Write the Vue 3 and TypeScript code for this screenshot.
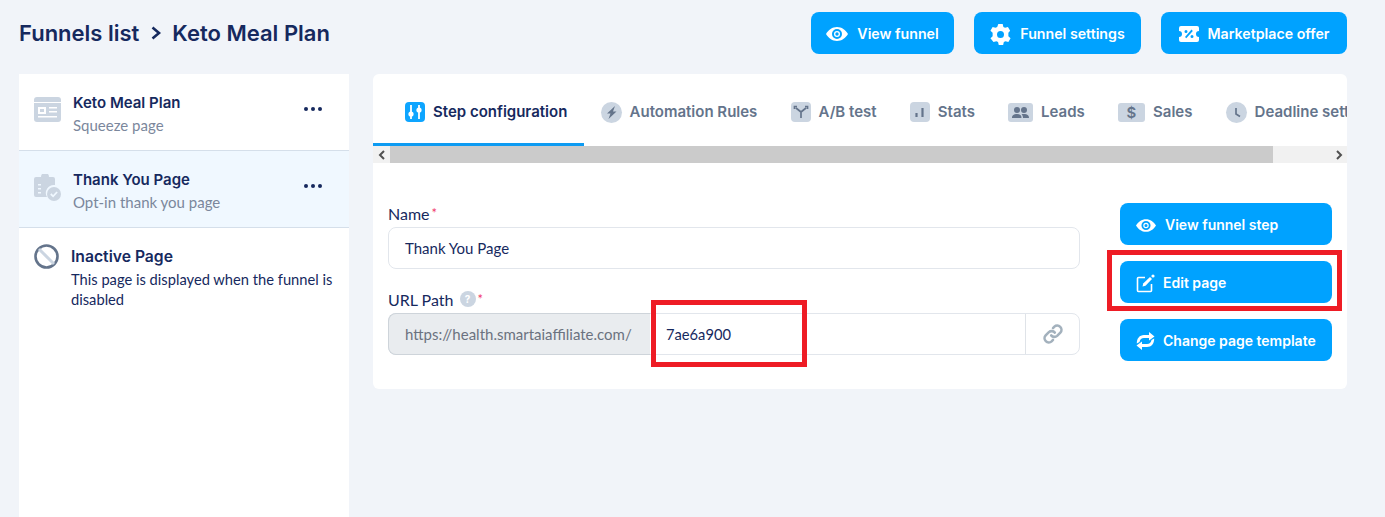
<script setup lang="ts">
const tabs: { label: string; w: number; h: number; r: string; kind: string }[] = [
  { label: 'Automation Rules', w: 21, h: 21, r: '50%', kind: 'bolt' },
  { label: 'A/B test', w: 20, h: 20, r: '4px', kind: 'split' },
  { label: 'Stats', w: 20, h: 20, r: '4px', kind: 'bars' },
  { label: 'Leads', w: 25, h: 19, r: '3px', kind: 'users' },
  { label: 'Sales', w: 27, h: 19, r: '3px', kind: 'dollar' },
  { label: 'Deadline settings', w: 21, h: 21, r: '50%', kind: 'clock' },
]
</script>

<template>
  <div class="page">
    <header class="top">
      <h1 class="crumbs">
        <span>Funnels list</span>
        <svg class="chev" viewBox="0 0 12 14" width="12" height="14"><path d="M2.500 1.500L9 7l-6.500 5.500" fill="none" stroke="#16295e" stroke-width="2.600" /></svg>
        <span>Keto Meal Plan</span>
      </h1>
      <div class="top-actions">
        <button class="btn top-btn b1">
          <svg width="22" height="14" viewBox="0 0 22 14"><path fill="#fff" fill-rule="evenodd" d="M11 0c4.600 0 8.600 2.800 11 7-2.400 4.200-6.400 7-11 7S2.400 11.200 0 7c2.400-4.200 6.400-7 11-7zm0 2a5 5 0 100 10 5 5 0 000-10zm0 2a3 3 0 110 6 3 3 0 010-6zm0 1.300a1.700 1.700 0 100 3.400 1.700 1.700 0 000-3.400z" /></svg>
          View funnel
        </button>
        <button class="btn top-btn b2">
          <svg width="21" height="21" viewBox="0 0 24 24"><path fill="#fff" fill-rule="evenodd" d="M9.500 0h5l.8 3.300 1.900 1.100 3.300-1 2.500 4.300L21 10v4l2.500 2.300-2.500 4.300-3.300-1-1.900 1.100-.8 3.300h-5l-.8-3.300-1.900-1.100-3.300 1L.5 16.300 3 14v-4L.5 7.700 3 3.400l3.300 1 1.900-1.100zM12 8a4 4 0 100 8 4 4 0 000-8z" /></svg>
          Funnel settings
        </button>
        <button class="btn top-btn b3">
          <svg width="20" height="16" viewBox="0 0 20 16"><path fill="#fff" fill-rule="evenodd" d="M2 0h16a2 2 0 012 2v3a3 3 0 000 6v3a2 2 0 01-2 2H2a2 2 0 01-2-2v-3a3 3 0 000-6V2a2 2 0 012-2zm10.500 3.500L6 11l1.300 1.300L13.800 5zM7 4a1.500 1.500 0 100 3 1.500 1.500 0 000-3zm6 5a1.500 1.500 0 100 3 1.500 1.500 0 000-3z" /></svg>
          Marketplace offer
        </button>
      </div>
    </header>

    <div class="columns">
      <aside class="side">
        <div class="step">
          <svg class="step-ico" width="27" height="25" viewBox="0 0 27 25">
            <path fill="#cbd5e1" d="M3 0h21a3 3 0 013 3v19a3 3 0 01-3 3H3a3 3 0 01-3-3V3a3 3 0 013-3z" />
            <path fill="#fff" d="M0 5h27v1H0zM4 10h8v7H4zM15 10h8v1.500h-8zM15 14h8v1.500h-8zM4 19h19v1.500H4z" />
            <path fill="#cbd5e1" d="M6 12h4v3H6z" />
          </svg>
          <div class="step-text">
            <div class="step-title">Keto Meal Plan</div>
            <div class="step-sub">Squeeze page</div>
          </div>
          <div class="dots"><i></i><i></i><i></i></div>
        </div>
        <div class="step active">
          <svg class="step-ico" width="27" height="27" viewBox="0 0 27 27">
            <path fill="#cbd5e1" d="M2 3h5a4 4 0 018 0h4a2 2 0 012 2v6a8 8 0 00-8 12H2a2 2 0 01-2-2V5a2 2 0 012-2z" />
            <path fill="#f0f8ff" d="M4 10h3v1.500H4zM4 14h3v1.500H4zM4 18h3v1.500H4z" />
            <circle cx="20" cy="20" r="7" fill="#cbd5e1" />
            <path d="M16.800 20l2.300 2.300 4-4.300" fill="none" stroke="#f0f8ff" stroke-width="1.800" />
          </svg>
          <div class="step-text">
            <div class="step-title">Thank You Page</div>
            <div class="step-sub">Opt-in thank you page</div>
          </div>
          <div class="dots"><i></i><i></i><i></i></div>
        </div>
        <div class="inactive">
          <svg width="25" height="25" viewBox="0 0 25 25" class="inactive-ico">
            <circle cx="12.500" cy="12.500" r="11" fill="none" stroke="#64748b" stroke-width="2.600" />
            <path d="M5 5l15 15" stroke="#cbd5e1" stroke-width="3" />
          </svg>
          <div>
            <div class="inactive-title">Inactive Page</div>
            <p class="inactive-text">This page is displayed when the funnel is disabled</p>
          </div>
        </div>
      </aside>

      <main class="card">
        <nav class="tabs">
          <div class="tab current">
            <svg width="20" height="20" viewBox="0 0 20 20">
              <rect width="20" height="20" rx="4" fill="#0ea5ff" />
              <path stroke="#fff" stroke-width="1.800" d="M6 3v14M14 3v14" />
              <circle cx="6" cy="12" r="2.600" fill="#fff" /><circle cx="14" cy="8" r="2.600" fill="#fff" />
            </svg>
            <span>Step configuration</span>
          </div>
          <div v-for="t in tabs" :key="t.label" class="tab">
            <span class="tab-ico" :style="{ width: t.w + 'px', height: t.h + 'px', borderRadius: t.r }">
              <svg :width="t.w" :height="t.h" :viewBox="`0 0 ${t.w} ${t.h}`">
                <path v-if="t.kind === 'bolt'" fill="#64748b" d="M14 4L6 11.500h3.500L7.500 17l8-7.500H12z" />
                <path v-if="t.kind === 'split'" fill="none" stroke="#64748b" stroke-width="1.700" d="M10 16v-6M10 10L5 6M10 10l5-4M3.500 7V4.500H6M16.500 7V4.500H14" />
                <path v-if="t.kind === 'bars'" stroke="#64748b" stroke-width="2.200" d="M6.500 15v-4M12.500 15V6" />
                <path v-if="t.kind === 'users'" fill="#64748b" d="M9 4a3 3 0 110 6 3 3 0 010-6zM16 4a3 3 0 110 6 3 3 0 010-6zM4 15c0-3 2-4 5-4s4.500 1 4.500 4zM15 15c0-1.500-.4-3-1.500-3.800.8-.2 1.500-.2 2.500-.2 3 0 5 1 5 4z" />
                <text v-if="t.kind === 'dollar'" x="13.500" y="15" text-anchor="middle" fill="#64748b" class="dollar">$</text>
                <path v-if="t.kind === 'clock'" fill="none" stroke="#64748b" stroke-width="1.700" d="M10 6v6l4 2.500" />
              </svg>
            </span>
            <span>{{ t.label }}</span>
          </div>
        </nav>
        <div class="scrollbar">
          <span class="arrow">
            <svg width="8" height="10" viewBox="0 0 8 10"><path d="M6 1L2 5l4 4" fill="none" stroke="#505050" stroke-width="2" /></svg>
          </span>
          <span class="thumb"></span>
          <span class="arrow">
            <svg width="8" height="10" viewBox="0 0 8 10"><path d="M2 1l4 4-4 4" fill="none" stroke="#505050" stroke-width="2" /></svg>
          </span>
        </div>

        <div class="body">
          <form class="fields" @submit.prevent>
            <label class="lab">Name<em>*</em></label>
            <div class="input name-input">Thank You Page</div>
            <label class="lab url-lab">URL Path <span class="help">?</span><em>*</em></label>
            <div class="group">
              <span class="prefix">https://health.smartaiaffiliate.com/</span>
              <span class="slug">7ae6a900</span>
              <span class="link">
                <svg width="22" height="22" viewBox="0 0 24 24" fill="none" stroke="#a3b1bd" stroke-width="2.800" stroke-linecap="round"><path d="M10 13.500a4.500 4.500 0 006.500.5l3.500-3.500a4.600 4.600 0 00-6.500-6.500l-1.500 1.500" /><path d="M14 10.500a4.500 4.500 0 00-6.500-.5L4 13.500a4.600 4.600 0 006.500 6.500l1.500-1.500" /></svg>
              </span>
              <span class="mark slug-mark"></span>
            </div>
          </form>
          <div class="actions">
            <button class="btn act wide">
              <svg width="20" height="13" viewBox="0 0 22 14"><path fill="#fff" fill-rule="evenodd" d="M11 0c4.600 0 8.600 2.800 11 7-2.400 4.200-6.400 7-11 7S2.400 11.200 0 7c2.400-4.200 6.400-7 11-7zm0 2a5 5 0 100 10 5 5 0 000-10zm0 2a3 3 0 110 6 3 3 0 010-6zm0 1.300a1.700 1.700 0 100 3.400 1.700 1.700 0 000-3.400z" /></svg>
              View funnel step
            </button>
            <button class="btn act">
              <svg width="19" height="19" viewBox="0 0 19 19" fill="none"><path d="M9 3.500H2.500a1 1 0 00-1 1v12a1 1 0 001 1h12a1 1 0 001-1V10" stroke="#fff" stroke-width="1.600" /><path d="M6.500 12.500l.7-3L14 3l2 2-6.500 6.800z" fill="#fff" /><circle cx="17" cy="2" r="1.600" fill="#fff" /></svg>
              Edit page
              <span class="mark edit-mark"></span>
            </button>
            <button class="btn act">
              <svg width="19" height="18" viewBox="0 0 19 18"><path fill="#fff" d="M13 0l5.500 4.500L13 8.500V6H8c-2.500 0-4 1.500-4.500 4L.8 11.500C.8 6.500 3.500 3 8 3h5zM6 18L.5 13.500 6 9.500V12h5c2.500 0 4-1.500 4.500-4l2.700-1.500C18.200 11.500 15.500 15 11 15H6z" /></svg>
              Change page template
            </button>
          </div>
        </div>
      </main>
    </div>
  </div>
</template>

<style>
html, body { margin: 0; background: #f1f4f9; overflow: hidden; }
</style>

<style scoped>
.page {
  box-sizing: border-box;
  width: 1385px;
  height: 517px;
  padding: 0 38px 0 19px;
  overflow: hidden;
  font-family: Lato, "Noto Sans", sans-serif;
  color: #16295e;
}
.top {
  height: 74px;
  display: flex;
  justify-content: space-between;
}
.crumbs {
  margin: 18px 0 0;
  height: 30px;
  display: flex;
  align-items: center;
  gap: 10.500px;
  font: 600 22px/30px Inter, sans-serif;
  color: #16295e;
}
.top-actions {
  display: flex;
  gap: 20px;
  margin-top: 12px;
}
.btn {
  display: flex;
  align-items: center;
  border: 0;
  border-radius: 8px;
  background: #00a2ff;
  color: #fff;
  font: 600 14.200px/20px Inter, sans-serif;
  cursor: pointer;
  position: relative;
  padding: 2px 0 0;
}
.top-btn { height: 42px; gap: 9px; justify-content: center; }
.b1 { width: 143px; }
.b2 { width: 167px; }
.b3 { width: 186px; }
.columns {
  display: flex;
  gap: 24px;
  align-items: flex-start;
}
.side {
  width: 330px;
  height: 443px;
  flex: none;
  background: #fff;
}
.step {
  box-sizing: border-box;
  height: 77px;
  display: flex;
  align-items: flex-start;
  padding: 0 20px 0 15px;
  border-bottom: 1px solid #d5dfea;
}
.step.active { background: #f0f8ff; }
.step-ico { margin-top: 23px; flex: none; }
.step-text { margin-left: 12px; flex: 1; }
.step-title {
  margin-top: 19px;
  font: 600 15px/20px Inter, sans-serif;
  color: #16295e;
}
.step-sub {
  margin-top: 2px;
  font-size: 15px;
  line-height: 20px;
  color: #7b879c;
}
.dots {
  display: flex;
  gap: 3px;
  margin-top: 33px;
  margin-right: 7px;
}
.dots i {
  width: 4px;
  height: 4px;
  border-radius: 50%;
  background: #16295e;
}
.inactive {
  display: flex;
  padding: 15px 15px 0 15px;
}
.inactive-ico { flex: none; margin-right: 12px; margin-top: 1px; }
.inactive-title {
  margin-top: 4px;
  font: 600 15.700px/20px Inter, sans-serif;
}
.inactive-text {
  margin: 2px 0 0;
  font-size: 14.700px;
  line-height: 20px;
}
.card {
  flex: none;
  width: 974px;
  height: 315px;
  background: #fff;
  border-radius: 6px;
  overflow: hidden;
}
.tabs {
  height: 72px;
  display: flex;
  overflow: hidden;
  white-space: nowrap;
}
.tab {
  box-sizing: border-box;
  height: 72px;
  display: flex;
  align-items: center;
  gap: 8px;
  padding: 4px 16.600px 0;
  font: 600 15px/20px Inter, sans-serif;
  color: #64748b;
  flex: none;
}
.tab.current {
  padding-left: 32px;
  color: #16295e;
  box-shadow: inset 0 -3px 0 #0d9bf2;
}
.tab-ico {
  display: block;
  background: #cbd5e1;
  flex: none;
}
.tab-ico svg { display: block; }
.dollar { font: 600 15px Inter, sans-serif; }
.scrollbar {
  height: 17px;
  display: flex;
  background: #f1f1f1;
}
.arrow {
  width: 17px;
  display: flex;
  align-items: center;
  justify-content: center;
  flex: none;
}
.arrow:last-child { margin-left: auto; }
.thumb {
  width: 883px;
  background: #cbcbcb;
  flex: none;
}
.body {
  display: flex;
  padding: 40px 15px 0 15px;
}
.fields { width: 692px; flex: none; }
.lab {
  display: flex;
  align-items: center;
  height: 20px;
  font-size: 16px;
  color: #16295e;
}
.lab em {
  color: #f0386b;
  font-style: normal;
  font-size: 13px;
  margin-left: 2px;
}
.help {
  display: inline-flex;
  width: 16px;
  height: 16px;
  margin-left: 6px;
  border-radius: 50%;
  background: #cbd5e1;
  color: #fff;
  font: 700 10px/16px Inter, sans-serif;
  justify-content: center;
}
.input {
  box-sizing: border-box;
  height: 42px;
  margin-top: 4px;
  padding: 0 16px;
  display: flex;
  align-items: center;
  border: 1px solid #e2e6ec;
  border-radius: 8px;
  font-size: 15px;
}
.url-lab { margin-top: 20px; }
.group {
  position: relative;
  display: flex;
  height: 42px;
  margin-top: 4px;
  box-sizing: border-box;
  border: 1px solid #e2e6ec;
  border-radius: 8px;
  font-size: 15px;
}
.prefix {
  width: 262px;
  flex: none;
  margin: -1px 0 -1px -1px;
  padding-left: 16px;
  box-sizing: border-box;
  display: flex;
  align-items: center;
  background: #e9ecef;
  border: 1px solid #ced4da;
  border-right: 0;
  border-radius: 8px 0 0 8px;
  color: #6b7280;
}
.slug {
  flex: 1;
  display: flex;
  align-items: center;
  padding-left: 16px;
  font-size: 14.700px;
}
.link {
  width: 53px;
  flex: none;
  display: flex;
  align-items: center;
  justify-content: center;
  border-left: 1px solid #dfe3e8;
}
.actions {
  margin-left: 40px;
  width: 212px;
  display: flex;
  flex-direction: column;
  gap: 16px;
}
.act {
  height: 42px;
  gap: 8px;
  padding-left: 16px;
  font-size: 14px;
}
.act.wide { gap: 9px; padding-left: 16px; }
.mark {
  position: absolute;
  box-sizing: border-box;
  border: 5px solid #ee1c25;
  pointer-events: none;
}
.edit-mark { left: -13px; top: -11px; width: 235px; height: 61px; }
.slug-mark { left: 262px; top: -14px; width: 156px; height: 67px; }
</style>
